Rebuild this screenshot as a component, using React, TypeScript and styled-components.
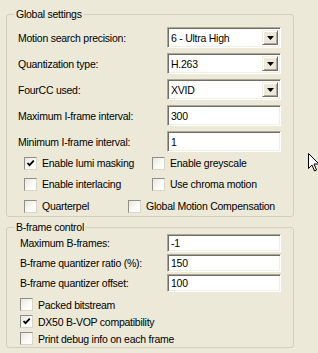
import React from 'react';
import styled, { createGlobalStyle } from 'styled-components';

const Global = createGlobalStyle`
  html, body { margin: 0; padding: 0; background: #ece9d8; }
  body {
    font-family: "Liberation Sans", Arial, sans-serif;
    font-size: 10.5px;
    letter-spacing: -0.25px;
    color: #000;
  }
`;

const Page = styled.div`
  position: relative;
  width: 318px;
  height: 353px;
  overflow: hidden;
  box-sizing: border-box;
  padding-top: 8px;
  display: flex;
  flex-direction: column;
  gap: 4px;
`;

const Group = styled.fieldset<{ $pt: number; $pl: number; $pb: number }>`
  margin: 0 0 0 6px;
  width: 288px;
  min-width: 0;
  box-sizing: border-box;
  border: 1px solid #d0d0bf;
  border-radius: 3px;
  padding: ${(p) => p.$pt}px 12px ${(p) => p.$pb}px ${(p) => p.$pl}px;
`;

const Legend = styled.legend<{ $ml: number }>`
  padding: 0 2px;
  margin-left: ${(p) => p.$ml}px;
  line-height: 13px;
  height: 13px;
`;

const Fields = styled.div<{ $gap: number }>`
  display: grid;
  grid-template-columns: 1fr 114px;
  row-gap: ${(p) => p.$gap}px;
  align-items: center;
`;

const FieldLabel = styled.span`
  white-space: nowrap;
`;

const Combo = styled.div`
  height: 21px;
  box-sizing: border-box;
  display: flex;
  align-items: stretch;
  background: #fff;
  border-style: solid;
  border-width: 1px;
  border-color: #aca899 #fff #fff #aca899;
  box-shadow: inset 1px 1px 0 #716f64, inset -1px -1px 0 #f1efe2;
  padding: 2px;
`;

const ComboText = styled.span`
  flex: 1;
  display: flex;
  align-items: center;
  padding-left: 1px;
  white-space: nowrap;
`;

const DropButton = styled.span`
  width: 16px;
  box-sizing: border-box;
  background: #ece9d8;
  border-style: solid;
  border-width: 1px;
  border-color: #f1efe2 #716f64 #716f64 #f1efe2;
  box-shadow: inset 1px 1px 0 #fff, inset -1px -1px 0 #aca899;
  display: flex;
  align-items: center;
  justify-content: center;
`;

const TextBox = styled.div<{ $h: number }>`
  height: ${(p) => p.$h}px;
  box-sizing: border-box;
  background: #fff;
  border-style: solid;
  border-width: 1px;
  border-color: #aca899 #fff #fff #aca899;
  box-shadow: inset 1px 1px 0 #716f64, inset -1px -1px 0 #f1efe2;
  padding-left: 3px;
  display: flex;
  align-items: center;
`;

const CheckGrid = styled.div<{ $cols: string; $h: number; $mt: number }>`
  display: grid;
  grid-template-columns: ${(p) => p.$cols};
  height: ${(p) => p.$h}px;
  margin-top: ${(p) => p.$mt}px;
  align-items: center;
`;

const CheckRow = styled.label`
  display: flex;
  align-items: center;
  gap: 5px;
  white-space: nowrap;
`;

const Box = styled.span`
  width: 13px;
  height: 13px;
  flex: none;
  box-sizing: border-box;
  border: 1px solid #8f8f88;
  border-right-color: #d8d6c8;
  border-bottom-color: #d8d6c8;
  background: linear-gradient(135deg, #e8e6dc 0%, #fbfbf8 60%, #fff 100%);
  display: flex;
  align-items: center;
  justify-content: center;
`;

const Cursor = styled.svg`
  position: absolute;
  left: 308px;
  top: 153px;
`;

function Check({ label, checked }: { label: string; checked?: boolean }) {
  return (
    <CheckRow>
      <Box>
        {checked && (
          <svg width="9" height="9" viewBox="0 0 9 9">
            <path d="M1.5 4 L3.5 6.2 L7.8 1.6" fill="none" stroke="#000" strokeWidth="1.8" />
          </svg>
        )}
      </Box>
      <span>{label}</span>
    </CheckRow>
  );
}

function Select({ value }: { value: string }) {
  return (
    <Combo>
      <ComboText>{value}</ComboText>
      <DropButton>
        <svg width="7" height="4" viewBox="0 0 7 4">
          <path d="M0 0 H7 L3.5 4 Z" fill="#000" />
        </svg>
      </DropButton>
    </Combo>
  );
}

export default function App() {
  return (
    <Page>
      <Global />
      <Group $pt={6} $pl={11} $pb={2}>
        <Legend $ml={-4}>Global settings</Legend>
        <Fields $gap={5}>
          <FieldLabel>Motion search precision:</FieldLabel>
          <Select value="6 - Ultra High" />
          <FieldLabel>Quantization type:</FieldLabel>
          <Select value="H.263" />
          <FieldLabel>FourCC used:</FieldLabel>
          <Select value="XVID" />
          <FieldLabel>Maximum I-frame interval:</FieldLabel>
          <TextBox $h={21}>300</TextBox>
          <FieldLabel>Minimum I-frame interval:</FieldLabel>
          <TextBox $h={21}>1</TextBox>
        </Fields>
        <CheckGrid $cols="6px 128px 1fr" $h={16} $mt={3}>
          <span />
          <Check label="Enable lumi masking" checked />
          <Check label="Enable greyscale" />
        </CheckGrid>
        <CheckGrid $cols="6px 128px 1fr" $h={16} $mt={5}>
          <span />
          <Check label="Enable interlacing" />
          <Check label="Use chroma motion" />
        </CheckGrid>
        <CheckGrid $cols="6px 104px 1fr" $h={16} $mt={6}>
          <span />
          <Check label="Quarterpel" />
          <Check label="Global Motion Compensation" />
        </CheckGrid>
      </Group>
      <Group $pt={0} $pl={13} $pb={0}>
        <Legend $ml={-6}>B-frame control</Legend>
        <Fields $gap={2}>
          <FieldLabel>Maximum B-frames:</FieldLabel>
          <TextBox $h={18}>-1</TextBox>
          <FieldLabel>B-frame quantizer ratio (%):</FieldLabel>
          <TextBox $h={18}>150</TextBox>
          <FieldLabel>B-frame quantizer offset:</FieldLabel>
          <TextBox $h={18}>100</TextBox>
        </Fields>
        <CheckGrid $cols="1fr" $h={17} $mt={4}>
          <Check label="Packed bitstream" />
        </CheckGrid>
        <CheckGrid $cols="1fr" $h={17} $mt={0}>
          <Check label="DX50 B-VOP compatibility" checked />
        </CheckGrid>
        <CheckGrid $cols="1fr" $h={17} $mt={0}>
          <Check label="Print debug info on each frame" />
        </CheckGrid>
      </Group>
      <Cursor width="12" height="20" viewBox="0 0 12 20">
        <path
          d="M0.5 0.5 L0.5 15.5 L4 12 L6.5 18 L8.5 17 L6 11 L11 11 Z"
          fill="#fff"
          stroke="#000"
          strokeWidth="1"
          strokeLinejoin="miter"
        />
      </Cursor>
    </Page>
  );
}
